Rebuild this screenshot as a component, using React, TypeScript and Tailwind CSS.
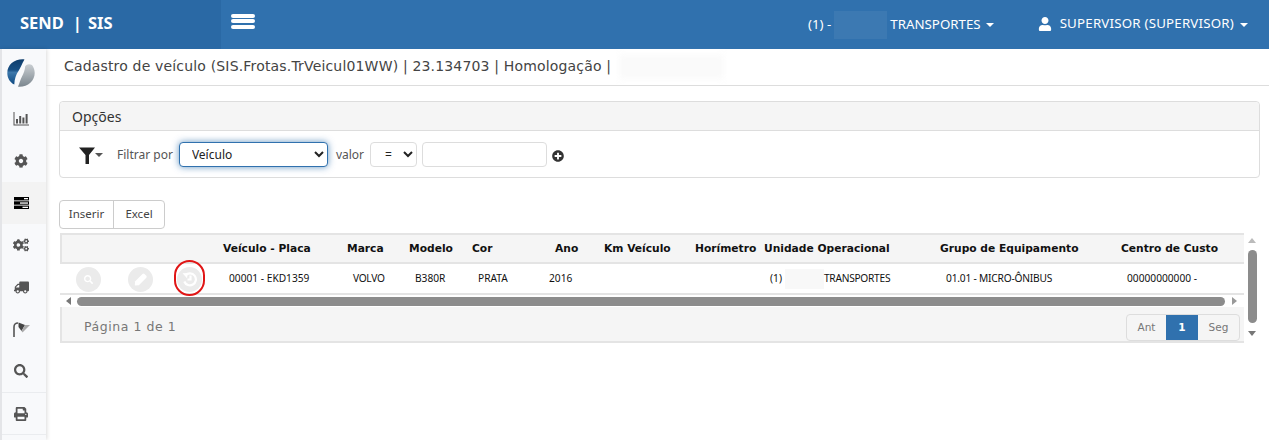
import React from "react";
import { FaCog, FaCogs, FaTruck, FaSearch, FaPrint, FaPlusCircle, FaUser } from "react-icons/fa";

const sans = "font-['DejaVu_Sans',sans-serif]";
const body = "font-['Noto_Sans',sans-serif]";

const Caret = ({ c = "border-t-white" }: { c?: string }) => (
  <span className={`inline-block w-0 h-0 border-x-[4px] border-x-transparent border-t-[4px] ${c}`} />
);

const Logo = () => (
  <svg width="28" height="28" viewBox="0 0 28 28">
    <defs>
      <linearGradient id="lb" x1="0" y1="0" x2="0" y2="1">
        <stop offset="0" stopColor="#0f3d6b" />
        <stop offset="0.42" stopColor="#174f84" />
        <stop offset="0.52" stopColor="#3d78ab" />
        <stop offset="1" stopColor="#0e4a82" />
      </linearGradient>
      <linearGradient id="lg" x1="0" y1="0" x2="0" y2="1">
        <stop offset="0" stopColor="#c9ced2" />
        <stop offset="1" stopColor="#7b868e" />
      </linearGradient>
    </defs>
    <path d="M17.500 0.400C8 -0.500 0.300 5.500 0.300 14c0 5 2.700 9.500 7 11.500C7.500 20 9 15.500 11.500 12 13.500 9 15 4.500 17.500 0.400z" fill="url(#lb)" />
    <path d="M11 27.800C20.500 28.500 27.700 22 27.700 14c0-3-1-6-2.700-8-2.500-1.500-5.500-1-6.800 1.200C18 11 16.500 14.500 15 17.500 13.500 20.500 12.500 24 11 27.800z" fill="url(#lg)" />
  </svg>
);

const BarChartIcon = () => (
  <svg width="16" height="14" viewBox="0 0 16 14" fill="#555">
    <path d="M0.500 0v13.500H16v-1H1.500V0z" />
    <rect x="3" y="7" width="2" height="4.500" />
    <rect x="6.200" y="4" width="2" height="7.500" />
    <rect x="9.400" y="5.500" width="2" height="6" />
    <rect x="12.600" y="2" width="2" height="9.500" />
  </svg>
);

const FlagIcon = () => (
  <svg width="17" height="15" viewBox="0 0 17 15">
    <path d="M1 15V5C1 2.500 2.500 1 5 1" fill="none" stroke="#555" strokeWidth="1.600" />
    <path d="M5.500 0.500L12 3 8.500 9 5.500 5z" fill="#444" />
    <path d="M12 3H17L9.500 10.500 8.500 9z" fill="#aaa" />
  </svg>
);

const TasksIcon = () => (
  <svg width="15" height="12" viewBox="0 0 15 12">
    <rect width="15" height="3.400" fill="#000" />
    <rect x="10" y="1" width="4" height="1.300" fill="#fff" />
    <rect y="4.300" width="15" height="3.400" fill="#000" />
    <rect x="6" y="5.400" width="8" height="1.300" fill="#fff" />
    <rect y="8.600" width="15" height="3.400" fill="#000" />
    <rect x="8.500" y="9.700" width="5.500" height="1.300" fill="#fff" />
  </svg>
);

const FilterIcon = () => (
  <svg width="16" height="17" viewBox="0 0 16 17" fill="#222">
    <path d="M0 0.500H16L10 8V17H6.500V8z" />
  </svg>
);

const PencilIcon = () => (
  <svg width="14" height="14" viewBox="0 0 14 14" fill="#fff">
    <path d="M1 9.500L8.500 2a1.500 1.500 0 0 1 2 0L12.300 3.700a1.500 1.500 0 0 1 0 2L4.800 13.200 0.800 13.500z" />
  </svg>
);

const HistoryIcon = () => (
  <svg width="16" height="16" viewBox="0 0 16 16" fill="none" stroke="#fff" strokeWidth="2.200">
    <path d="M3.500 4.200A6 6 0 1 1 2.300 10.500" />
    <path d="M0.500 2.200L5.800 2 5 7.200z" fill="#fff" stroke="none" />
    <path d="M8.500 4.500V8.500H5.500" />
  </svg>
);

const SideRow = ({ children, active, border }: { children: React.ReactNode; active?: boolean; border?: boolean }) => (
  <div className={`h-[42px] flex items-center justify-center pr-[6px] text-[#555] ${active ? "bg-[#f3f3f3]" : ""} ${border ? "border-t border-[#eaecef]" : ""}`}>
    {children}
  </div>
);

const cols = "grid grid-cols-[157px_124px_62px_63px_77px_55px_91px_69px_176px_181px_129px]";
const headCols = "grid grid-cols-[155px_124px_62px_63px_77px_55px_91px_69px_176px_181px_129px]";

const Action = ({ children, className = "" }: { children: React.ReactNode; className?: string }) => (
  <div className={`w-[25px] h-[25px] rounded-full bg-[#ebebeb] flex items-center justify-center text-white ${className}`}>{children}</div>
);

const Tri = ({ c }: { c: string }) => <span className={`w-0 h-0 ${c}`} />;

export default function App() {
  return (
    <div className={`w-[1269px] h-[440px] overflow-hidden bg-white flex flex-col ${sans}`}>
      <header className="h-[49px] shrink-0 bg-[#3071ae] flex items-center text-white">
        <div className={`w-[221px] h-full bg-[#2a69a5] pl-5 pb-[3px] flex items-center text-[16.500px] font-bold ${body}`}>
          <span>SEND</span>
          <span className="ml-[9px]">|</span>
          <span className="ml-[6px]">SIS</span>
        </div>
        <div className="ml-[10px] mb-[7px] w-6 flex flex-col gap-[1.500px]">
          <span className="h-1 rounded-sm bg-white" />
          <span className="h-1 rounded-sm bg-white" />
          <span className="h-1 rounded-sm bg-white" />
        </div>
        <div className={`ml-auto flex items-center text-[13.300px] ${body}`}>
          <span>(1) -</span>
          <span className="w-[53px] h-[28px] mx-[3px] bg-[#3c79b2]" />
          <span>TRANSPORTES</span>
          <span className="ml-[5px] mt-[1px] flex"><Caret /></span>
          <FaUser className="ml-[44px] mr-[8px] text-[14px] mb-[2px]" />
          <span className="mb-[1px] tracking-[0.2px]">SUPERVISOR (SUPERVISOR)</span>
          <span className="ml-[6px] mr-[21px] flex"><Caret /></span>
        </div>
      </header>

      <div className="flex-1 flex min-h-0">
        <aside className="w-[46px] shrink-0 border-l-2 border-[#e4e5e8] bg-[#f8f9fb] shadow-[1px_0_4px_rgba(0,0,0,0.14)] flex flex-col">
          <div className="h-[49px] shrink-0 flex items-center justify-center pr-[6px] pb-[1px]"><Logo /></div>
          <SideRow><BarChartIcon /></SideRow>
          <SideRow><FaCog className="text-[14px]" /></SideRow>
          <SideRow active><TasksIcon /></SideRow>
          <SideRow><FaCogs className="text-[16px]" /></SideRow>
          <SideRow><FaTruck className="text-[15px] -scale-x-100" /></SideRow>
          <SideRow><FlagIcon /></SideRow>
          <SideRow><FaSearch className="text-[14px]" /></SideRow>
          <SideRow border><FaPrint className="text-[14px]" /></SideRow>
          <div className="border-t border-[#eaecef]" />
        </aside>

        <main className="flex-1 min-w-0 flex flex-col">
          <div className="h-[37px] shrink-0 border-b border-[#dddddd] pl-[18px] flex items-center text-[14px] tracking-[0.17px] text-[#444] pb-[1px]">
            <span>Cadastro de veículo (SIS.Frotas.TrVeicul01WW) | 23.134703 | Homologação |</span>
            <span className="ml-2 w-[105px] h-[24px] bg-[#fafafa] blur-[3px]" />
          </div>

          <section className="mt-[15px] ml-[13px] mr-[9px] h-[77px] shrink-0 border border-[#dddddd] rounded">
            <div className={`h-[29px] bg-[#f5f5f5] border-b border-[#dddddd] pl-3 flex items-center text-[14px] text-[#333] rounded-t ${body}`}>Opções</div>
            <div className="h-[46px] flex items-center text-[#555] text-[12px]">
              <span className="ml-[19px] mt-[3px]"><FilterIcon /></span>
              <span className="mr-[14px] mt-[2px] flex"><Caret c="border-t-[#555]" /></span>
              <span className={`mt-[1px] ${body}`}>Filtrar por</span>
              <select
                defaultValue="Veículo"
                className={`ml-[6px] w-[149px] h-[25px] pl-2 bg-white text-[#222] text-[12px] rounded border border-[#3071ae] shadow-[0_0_7px_rgba(48,113,174,0.75)] outline-none ${body}`}
              >
                <option>Veículo</option>
              </select>
              <span className={`ml-[8px] mt-[1px] ${body}`}>valor</span>
              <select defaultValue="=" className={`ml-[6px] w-[47px] h-[25px] pl-[10px] bg-white text-[#222] text-[12px] rounded border border-[#dddddd] outline-none ${body}`}>
                <option>=</option>
              </select>
              <input className="ml-[5px] w-[125px] h-[25px] rounded border border-[#dddddd] outline-none" />
              <FaPlusCircle className="ml-[5px] mt-[3px] text-[12px] text-[#333]" />
            </div>
          </section>

          <div className={`mt-[22px] ml-[13px] h-[29px] w-[106px] shrink-0 flex border border-[#cccccc] rounded text-[11.500px] text-[#444] ${body}`}>
            <span className="w-[54px] flex items-center justify-center pb-[1px] border-r border-[#cccccc]">Inserir</span>
            <span className="flex-1 flex items-center justify-center pb-[1px]">Excel</span>
          </div>

          <div className="relative mt-[4px] ml-[14px] mr-[10px] flex shrink-0">
            <div className="w-[1184px]">
              <div className={`${headCols} h-[31px] pt-[1px] bg-[#f5f5f5] border-y-2 border-l-2 border-[#e4e4e4] items-center text-[10.700px] font-bold text-[#111]`}>
                <span />
                <span className="pl-[6px]">Veículo - Placa</span>
                <span className="pl-[6px]">Marca</span>
                <span className="pl-[6px]">Modelo</span>
                <span className="pl-[6px]">Cor</span>
                <span className="pl-[12px]">Ano</span>
                <span className="pl-[6px]">Km Veículo</span>
                <span className="pl-[6px]">Horímetro</span>
                <span className="pl-[6px]">Unidade Operacional</span>
                <span className="pl-[6px]">Grupo de Equipamento</span>
                <span className="pl-[6px]">Centro de Custo</span>
              </div>
              <div className={`${cols} h-[31px] pt-[1px] border-b-2 border-[#e4e4e4] items-center text-[10.200px] text-[#111] ${body}`}>
                <div className="flex items-center pl-[16px]">
                  <Action><FaSearch className="text-[9px]" /></Action>
                  <Action className="ml-[27px]"><PencilIcon /></Action>
                  <Action className="ml-[24px]"><HistoryIcon /></Action>
                </div>
                <span className="pl-[12px]">00001 - EKD1359</span>
                <span className="pl-[12px] tracking-[-0.3px]">VOLVO</span>
                <span className="pl-[12px]">B380R</span>
                <span className="pl-[12px]">PRATA</span>
                <span className="pl-[6px]">2016</span>
                <span />
                <span />
                <span className="pl-[12px] flex items-center">
                  (1)
                  <span className="ml-[3px] w-[39px] h-[20px] bg-[#f8f8f8]" />
                  <span className="tracking-[-0.27px]">TRANSPORTES</span>
                </span>
                <span className="pl-[12px] tracking-[-0.2px]">01.01 - MICRO-ÔNIBUS</span>
                <span className="pl-[12px]">00000000000 -</span>
              </div>
              <div className="h-[12px] flex items-center">
                <span className="w-[17px] flex justify-center"><Tri c="border-y-[4px] border-y-transparent border-r-[5px] border-r-[#777]" /></span>
                <span className="w-[1148px] h-[9px] rounded-full bg-[#8c8c8c]" />
                <span className="flex-1 flex justify-center"><Tri c="border-y-[4px] border-y-transparent border-l-[5px] border-l-[#999]" /></span>
              </div>
              <div className="h-[36px] bg-[#f5f5f5] border-b-2 border-l-2 border-[#e4e4e4] flex items-end justify-between pl-[22px] pr-[4px]">
                <span className="self-center text-[12.500px] text-[#777] tracking-[0.55px] pt-[6px]">Página 1 de 1</span>
                <div className="flex h-[27px] rounded border border-[#dddddd] text-[10.500px] text-[#777] overflow-hidden">
                  <span className="w-[39px] flex items-center justify-center">Ant</span>
                  <span className="w-[32px] flex items-center justify-center bg-[#3071ae] text-white font-bold">1</span>
                  <span className="w-[41px] flex items-center justify-center">Seg</span>
                </div>
              </div>
            </div>
            <div className="w-[15px] flex flex-col items-center pl-[1px]">
              <span className="mt-[5px]"><Tri c="block border-x-[4.500px] border-x-transparent border-b-[5px] border-b-[#bbb]" /></span>
              <span className="mt-[7px] w-[9px] h-[73px] rounded-full bg-[#8c8c8c]" />
              <span className="mt-[8px]"><Tri c="block border-x-[4.500px] border-x-transparent border-t-[5px] border-t-[#777]" /></span>
            </div>
            <span className="absolute left-[114px] top-[27px] w-[31px] h-[36px] rounded-full border-2 border-[#e01515]" />
          </div>
        </main>
      </div>
    </div>
  );
}
